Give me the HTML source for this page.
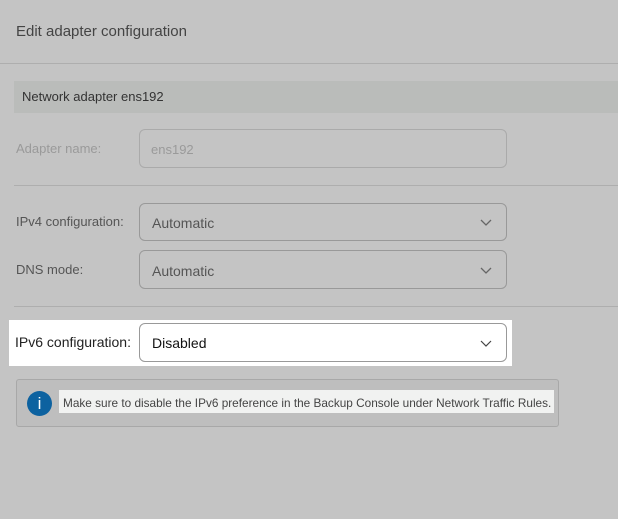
<html><head><style>
body{margin:0;width:618px;height:519px;background:#c4c4c4;font-family:"Liberation Sans",sans-serif;position:relative;overflow:hidden}
.a{position:absolute}
.t{font-size:14px;color:#5a5a5a}
.in{position:absolute;left:139px;width:366px;height:37px;border:1px solid #aaa;border-radius:6px;box-sizing:border-box}
.chev{position:absolute;right:14px;top:15px;width:12px;height:8px}
</style></head><body>
<div class="a" style="left:16px;top:23px;font-size:15px;color:#444">Edit adapter configuration</div>
<div class="a" style="left:0;top:63px;width:618px;height:1px;background:#aeaeae"></div>
<div class="a" style="left:14px;top:81px;width:604px;height:32px;background:#babcba"></div>
<div class="a" style="left:22px;top:89px;font-size:13px;color:#333">Network adapter ens192</div>
<div class="a t" style="left:16px;top:141px;color:#9a9a9a;font-size:13px">Adapter name:</div>
<div class="in" style="top:129px;height:39px;width:368px"><span class="a" style="left:11px;top:12px;font-size:13px;color:#9a9a9a">ens192</span></div>
<div class="a" style="left:14px;top:185px;width:604px;height:1px;background:#aeaeae"></div>
<div class="a t" style="left:16px;top:214px;font-size:13px;color:#555">IPv4 configuration:</div>
<div class="in" style="top:203px;height:38px;width:368px;border-color:#999"><span class="a" style="left:12px;top:11px;font-size:14px;color:#555">Automatic</span><svg class="chev" viewBox="0 0 12 8"><path d="M1 1l5 5 5-5" fill="none" stroke="#666" stroke-width="1.3"/></svg></div>
<div class="a t" style="left:16px;top:262px;font-size:13px;color:#555">DNS mode:</div>
<div class="in" style="top:250px;height:39px;width:368px;border-color:#999"><span class="a" style="left:12px;top:12px;font-size:14px;color:#555">Automatic</span><svg class="chev" viewBox="0 0 12 8" style="top:16px"><path d="M1 1l5 5 5-5" fill="none" stroke="#666" stroke-width="1.3"/></svg></div>
<div class="a" style="left:14px;top:306px;width:604px;height:1px;background:#aeaeae"></div>
<div class="a" style="left:9px;top:320px;width:503px;height:46px;background:#fff"></div>
<div class="a" style="left:15px;top:334px;font-size:14px;color:#222">IPv6 configuration:</div>
<div class="in" style="top:323px;height:39px;width:368px;border-color:#999"><span class="a" style="left:12px;top:11px;font-size:14px;color:#111">Disabled</span><svg class="chev" viewBox="0 0 12 8" style="top:16px"><path d="M1 1l5 5 5-5" fill="none" stroke="#444" stroke-width="1.2"/></svg></div>
<div class="a" style="left:16px;top:379px;width:543px;height:48px;box-sizing:border-box;border:1px solid #a8a8a8;border-radius:3px;background:#bebebe"></div>
<div class="a" style="left:27px;top:391px;width:25px;height:25px;border-radius:50%;background:#0d62a0;color:#fff;text-align:center;font-size:17px;line-height:25px">i</div>
<div class="a" style="left:59px;top:390px;width:495px;height:23px;background:#f1f2f1"></div>
<div class="a" style="left:63px;top:396px;font-size:11.8px;color:#444;white-space:nowrap">Make sure to disable the IPv6 preference in the Backup Console under Network Traffic Rules.</div>
</body></html>
